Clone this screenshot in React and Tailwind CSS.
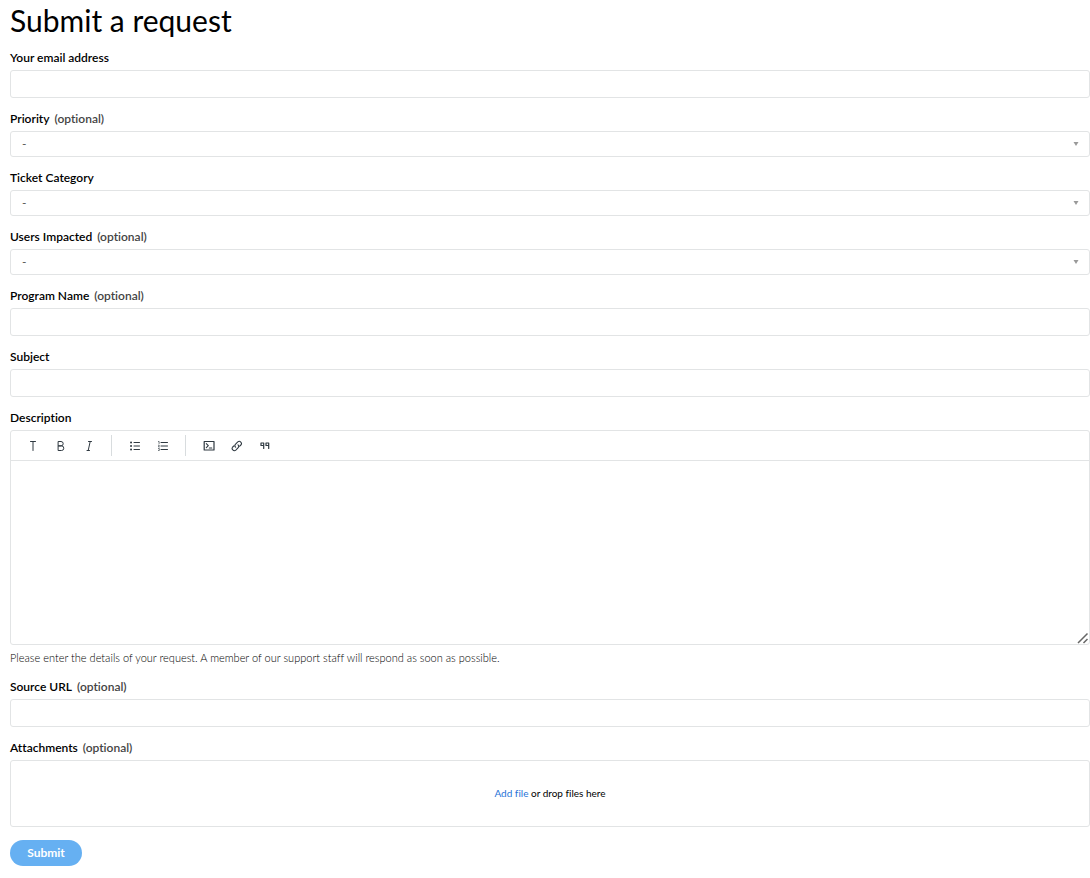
const Label = ({ id, text, optional }) => {
  return (
    <label htmlFor={id} className="block mb-1 text-xs leading-[17px] font-semibold text-black">
      {text}
      {optional && <span className="ml-0.5 text-[#444]"> (optional)</span>}
    </label>
  )
}

const TextField = ({ id, label, optional, type = "text" }) => {
  return (
    <div>
      <Label id={id} text={label} optional={optional} />
      <input
        id={id}
        type={type}
        className="block w-full h-7 px-3 text-xs border border-[#e2e4e5] rounded-[3px] outline-none focus:border-[#1f73b7]"
      />
    </div>
  )
}

const SelectField = ({ id, label, optional }) => {
  return (
    <div>
      <Label id={id} text={label} optional={optional} />
      <div className="relative">
        <select
          id={id}
          className="block w-full h-[26px] pl-[11px] pr-8 text-xs text-[#555] bg-white border border-[#e2e4e5] rounded-[3px] appearance-none outline-none"
        >
          <option>-</option>
        </select>
        <svg viewBox="0 0 6 4" className="absolute right-[11px] top-[11px] w-[6px] h-1 pointer-events-none" fill="#999">
          <path d="M0.5 0h5L3 4z" />
        </svg>
      </div>
    </div>
  )
}

const ToolButton = ({ title, children }) => {
  return (
    <button type="button" title={title} aria-label={title} className="flex items-center justify-center w-7 h-6 text-[#2f3941]">
      <svg
        viewBox="0 0 12 12"
        className="w-3 h-3"
        fill="none"
        stroke="currentColor"
        strokeLinecap="round"
        strokeLinejoin="round"
      >
        {children}
      </svg>
    </button>
  )
}

const Divider = () => <div className="w-px h-[21px] ml-2 mr-[9px] bg-[#d8dcde]" />

const Toolbar = () => {
  return (
    <div className="flex items-center h-[30px] pl-2 border-b border-[#e2e4e5]">
      <ToolButton title="Text style">
        <path d="M3.5 1.5h5M6 1.5v9" />
      </ToolButton>
      <ToolButton title="Bold">
        <path d="M3.5 1.5H6a2.2 2.2 0 0 1 0 4.4H3.5zM3.5 5.9h3a2.3 2.3 0 0 1 0 4.6h-3z" />
      </ToolButton>
      <ToolButton title="Italic">
        <path d="M5.5 1.5h3M4 10.5h2.5M7.2 1.5l-2 9" />
      </ToolButton>
      <Divider />
      <ToolButton title="Bulleted list">
        <path d="M5 2.5h5.5M5 6h5.5M5 9.5h5.5" />
        <path d="M2 2.5h.1M2 6h.1M2 9.5h.1" strokeWidth="1.9" />
      </ToolButton>
      <ToolButton title="Numbered list">
        <path d="M4 2.5h6.5M4 6h6.5M4 9.5h6.5" />
        <path d="M1.5 1.5h.6v2M1.5 5.2h.8L1.5 7h.8M1.5 8.5h.8v2h-.8" strokeWidth="0.7" />
      </ToolButton>
      <Divider />
      <ToolButton title="Code block">
        <path d="M1.2 1.5H11V10H1.2z" strokeWidth="1.2" />
        <path d="M3.3 3.7l2 2-2 2M6.3 8h2.5" strokeWidth="1.1" />
      </ToolButton>
      <ToolButton title="Link">
        <path d="M4.6 7.2a2.2 2.2 0 0 1 0-3.1l2.200-2.200a2.200 2.200 0 0 1 3.100 3.100L8.700 6.200" strokeWidth="1.1" />
        <path d="M7 4.800a2.200 2.200 0 0 1 0 3.100L4.800 10.100a2.200 2.200 0 0 1-3.100-3.100L2.900 5.800" strokeWidth="1.1" />
      </ToolButton>
      <ToolButton title="Quote">
        <path d="M4.700 5.500H2V3h2.700v5.500M9.700 5.500H7V3h2.700v5.500" strokeWidth="1.2" />
      </ToolButton>
    </div>
  )
}

const App = () => {
  return (
    <main className="pl-[10px] pt-1 pb-3 font-['Lato',sans-serif] [font-variant-ligatures:none] text-black bg-white">
      <h1 className="mb-[13px] text-[30px] leading-8">Submit a request</h1>
      <form className="flex flex-col gap-3" onSubmit={(e) => e.preventDefault()}>
        <TextField id="email" label="Your email address" type="email" />
        <SelectField id="priority" label="Priority" optional />
        <SelectField id="category" label="Ticket Category" />
        <SelectField id="users" label="Users Impacted" optional />
        <TextField id="program" label="Program Name" optional />
        <TextField id="subject" label="Subject" />

        <div>
          <Label id="description" text="Description" />
          <div className="relative border border-[#e2e4e5] rounded-[3px]">
            <Toolbar />
            <textarea id="description" className="block w-full h-[183px] px-3 py-2 text-xs outline-none resize-none" />
            <svg viewBox="0 0 12 12" className="absolute right-0 bottom-0 w-3 h-3 pointer-events-none" fill="none" stroke="#666" strokeWidth="1.5">
              <path d="M1 11L10.500 1.500M6.500 11L10.500 7" />
            </svg>
          </div>
          <p className="mt-[5px] text-[11px] leading-4 text-black font-light">
            Please enter the details of your request. A member of our support staff will respond as soon as possible.
          </p>
        </div>

        <TextField id="source" label="Source URL" optional />

        <div className="mb-px">
          <Label id="attachments" text="Attachments" optional />
          <div className="flex items-center justify-center h-[67px] text-[10px] border border-[#e2e4e5] rounded-[3px]">
            <input id="attachments" type="file" multiple className="hidden" />
            <p>
              <a href="#attachments" className="text-[#1f73d7]">Add file</a> or drop files here
            </p>
          </div>
        </div>

        <button type="submit" className="self-start w-[72px] h-[26px] text-xs font-bold text-white bg-[#66b0f2] rounded-full">
          Submit
        </button>
      </form>
    </main>
  )
}
export default App
